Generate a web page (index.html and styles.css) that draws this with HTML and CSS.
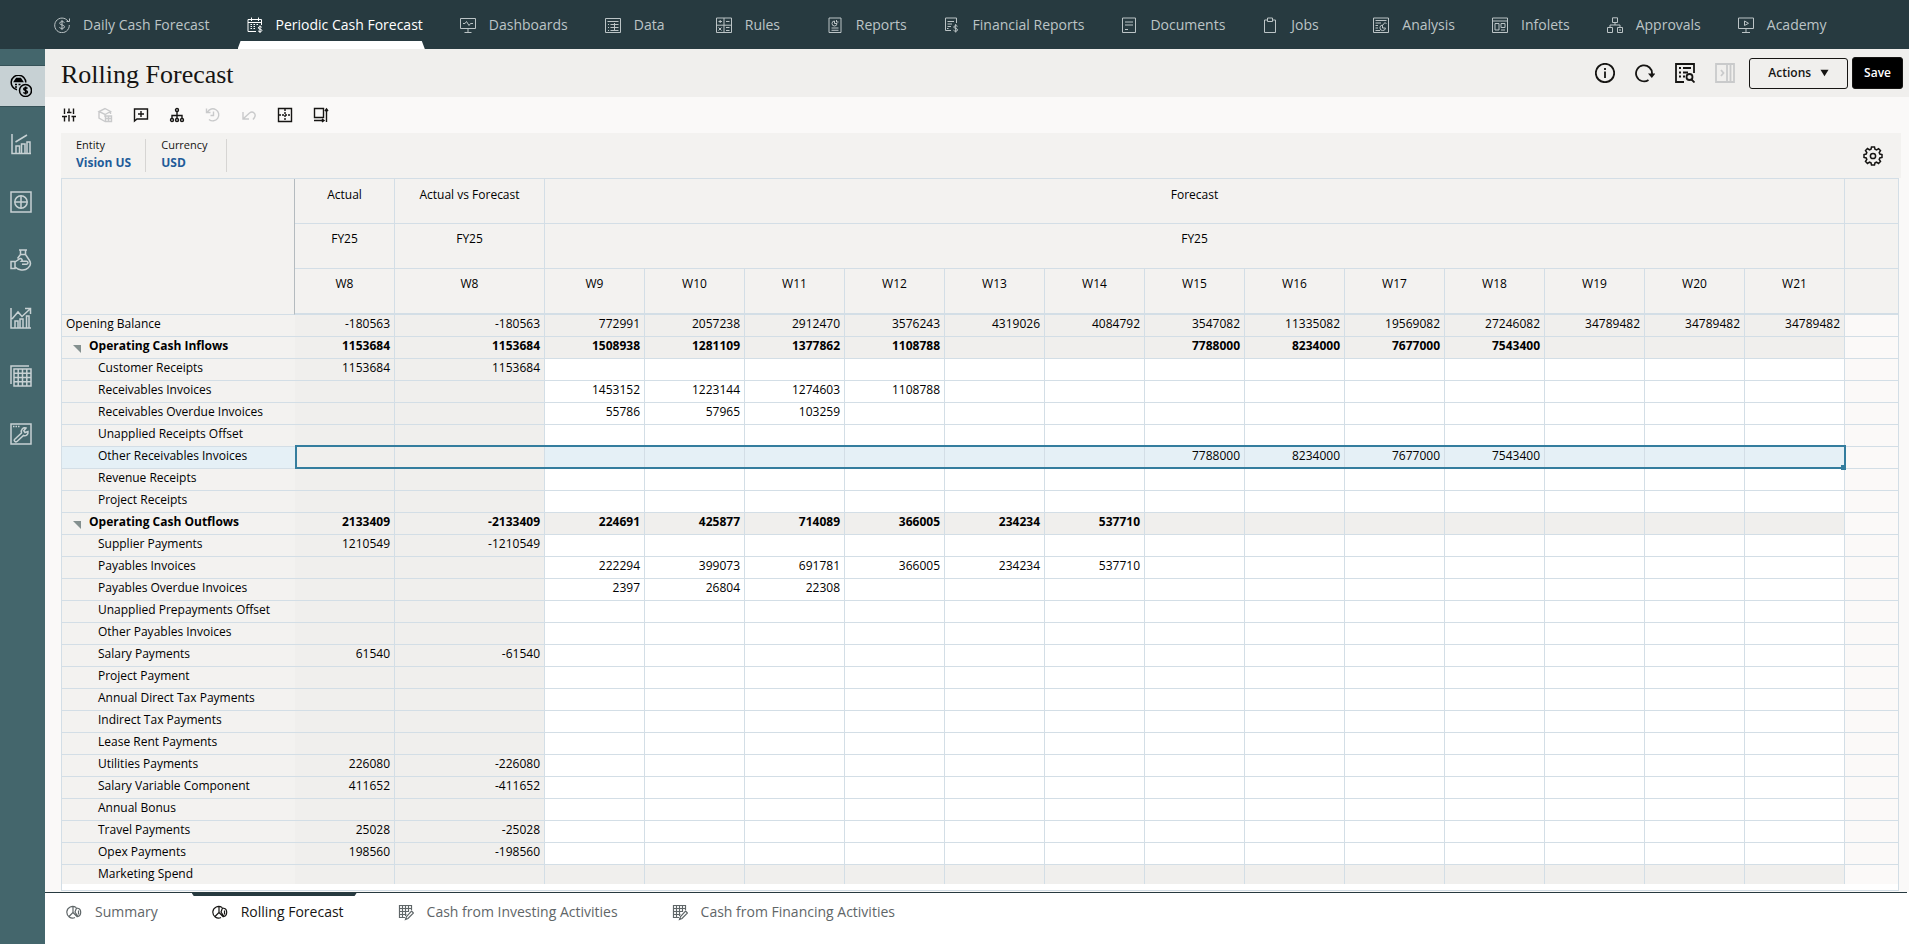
FILE: index.html
```html
<!DOCTYPE html>
<html lang="en">
<head>
<meta charset="utf-8">
<title>Rolling Forecast</title>
<link rel="stylesheet" href="styles.css">
</head>
<body>
<nav class="topnav" aria-label="Main">
  <a href="#"><svg viewBox="0 0 16 16"><path d="M14 4.2A7.3 7.3 0 1 0 15.3 8M15.5 1.500V4.500H12.500"/><path d="M10.500 5.500C9.500 4.200 5.700 4.200 5.700 6.300C5.700 8.500 10.500 7.400 10.500 9.800C10.500 11.900 6.400 11.900 5.400 10.400M8 3V13"/></svg>Daily Cash Forecast</a>
  <a href="#" class="active" aria-current="page"><svg viewBox="0 0 16 16"><path d="M9 14.500H1V2.500H14.500V8M1 5.500H14.500M4.500 .5V4M11.500 .5V4"/><path d="M3.500 7.500H5M6.500 7.500H8M9.500 7.500H11M3.500 9.500H5M6.500 9.500H8M3.500 11.500H5M6.500 11.500H8"/><path d="M14.800 10.300C14 9.300 11.300 9.400 11.300 10.900C11.300 12.500 14.900 11.700 14.900 13.400C14.900 15 12 15 11.100 13.900M13 8.500V16"/></svg>Periodic Cash Forecast</a>
  <a href="#"><svg viewBox="0 0 16 16"><path d="M.5 1.500H15.500V11.500H.5ZM8 11.500V15M4.500 15.500H11.500M3 6.500H5L6.500 4.500L9 8.500L10.500 6.500H13"/></svg>Dashboards</a>
  <a href="#"><svg viewBox="0 0 16 16"><path d="M.5 1.500H15.500V15.500H.5ZM2.500 4.500H13.500M3 7.500H4M5.500 7.500H13.500M3 10.500H4M5.500 10.500H13.500M3 13.500H4M5.500 13.500H13.500M9.500 6V14"/></svg>Data</a>
  <a href="#"><svg viewBox="0 0 16 16"><path d="M.5 1H15.500V15.500H.5ZM8 1V15.500M.5 8.200H15.500M2.500 4.500H6M4.200 3V6M10 4.500H13.500M2.500 10.500L5.500 13.500M5.500 10.500L2.500 13.500M10 10.500H13.500M10 13.500H13.500"/></svg>Rules</a>
  <a href="#"><svg viewBox="0 0 16 16"><path d="M2 1H14V15.500H2ZM4.500 11H11.500M4.500 13.300H11.500M7.500 4A2.500 2.500 0 1 0 10 6.500H7.500ZM9.500 3V5H11.500"/></svg>Reports</a>
  <a href="#"><svg viewBox="0 0 16 16"><path d="M7 13.500H1.500V1H12.500V6M3.500 4.500H10M3.500 7H8M3.500 9.500H7M3 11.500H4.500"/><path d="M13.500 9.300C12.700 8.300 9.800 8.400 9.800 10.100C9.800 11.800 13.600 11 13.600 12.800C13.600 14.600 10.600 14.600 9.500 13.300M11.700 7V15.500"/></svg>Financial Reports</a>
  <a href="#"><svg viewBox="0 0 16 16"><path d="M1.500 1H14.500V15.500H1.500ZM4 5H12M4 8H12M4 12.500H7"/></svg>Documents</a>
  <a href="#"><svg viewBox="0 0 16 16"><path d="M5 3H2.500V15.500H13.500V3H11M5.500 1H10.500V4.500H5.500Z"/></svg>Jobs</a>
  <a href="#"><svg viewBox="0 0 16 16"><path d="M.5 1H15.500V15.500H.5ZM2.500 3.500H13.500M2.500 6H8M2.500 8.500H5M2.500 11H5M2.500 13.500H7M9.500 8A2.800 2.800 0 1 0 12.500 11H9.500ZM9 9L12 5.500L13.500 7"/></svg>Analysis</a>
  <a href="#"><svg viewBox="0 0 16 16"><path d="M.5 1H15.500V15.500H.5ZM.5 4H15.500M3 6.500H7V13H3ZM9 6.500H13V10.500H9ZM9 13H13"/></svg>Infolets</a>
  <a href="#"><svg viewBox="0 0 16 16"><path d="M5.500 .8H10.500V5.500H5.500ZM8 5.500V8M3 10.500V8H13V10.500M.5 10.500H5.500V15.500H.5ZM10.500 10.500H15.500V15.500H10.500ZM12 13H14"/></svg>Approvals</a>
  <a href="#"><svg viewBox="0 0 16 16"><path d="M.5 1H15.500V11.500H.5ZM8 11.500V15M4 15.500H12M6.500 4V8.500L10.500 6.300Z"/></svg>Academy</a>
</nav>
<div class="shell">
  <nav class="sidebar" aria-label="Forecast sections">
    <a href="#" class="active" aria-label="Cash forecast"><svg viewBox="0 0 22 22"><path d="M7 14.700A7.300 7.300 0 1 1 15.800 7.500"/><path d="M4.500 6.500H12.500L10.500 3.500H6.500ZM5 9.500H7M8.500 9.500H10.500M5 12H7" fill="currentColor"/><circle cx="15.500" cy="15.500" r="6"/><path d="M17.500 13.500C16.500 12.300 13.700 12.500 13.700 14.100C13.700 15.900 17.500 15 17.500 17C17.500 18.700 14.400 18.700 13.400 17.400M15.600 11.500V19.500"/></svg></a>
    <a href="#" aria-label="Performance"><svg viewBox="0 0 22 22"><path d="M2 1V20.500H21M6 20V13H9.500V20M11.500 20V11H15V20M17 20V9H20V20M5.500 9L17 2"/></svg></a>
    <a href="#" aria-label="Global"><svg viewBox="0 0 22 22"><path d="M1 1H21V21H1ZM11 4.800V17.200M4.800 11H17.200"/><circle cx="11" cy="11" r="6.200"/></svg></a>
    <a href="#" aria-label="Funding"><svg viewBox="0 0 22 22"><path d="M9 1H17M10.500 1V5.500L7.500 9.500M15.500 1V5.500L19.500 11.500C21 14 20.500 17 18 19M10.500 5.500H15.500M1 12.500H5V19.500H1ZM5 13L9.500 9.800C11.500 9 13 11 11.500 12.300H16.500C18.500 12.500 18.500 15 16.500 15.200H12M5 18C8 21 14.500 22.500 18 19"/></svg></a>
    <a href="#" aria-label="Trends"><svg viewBox="0 0 22 22"><path d="M1 1V21H21M5 21V14H8V21M10 21V12H13V21M16.500 21V9H19V21M2 12L8 5L12 9.500L20 2M15 1.500H20.500V7"/></svg></a>
    <a href="#" aria-label="Grids"><svg viewBox="0 0 22 22"><path d="M1 19V1H19M4 4H21V21H4ZM8.200 4V21M12.500 4V21M16.800 4V21M4 8.200H21M4 12.500H21M4 16.800H21"/></svg></a>
    <a href="#" aria-label="Configuration"><svg viewBox="0 0 22 22"><path d="M1 1H21V21H1ZM3 3.500H4.500M5.500 3.500H7M8 3.500H9.500M4.500 16.500L11.500 10C10.500 7 13 4 16 5L13.800 7.800L15 9.500L18 8.500C18.500 12 15.500 13.500 13.500 12.500L7 18.500C5.500 19.500 3.500 18 4.500 16.500Z"/></svg></a>
  </nav>
  <main class="main">
    <header class="page-head">
      <h1>Rolling Forecast</h1>
      <div class="head-actions">
        <button class="icon-btn" aria-label="Information"><svg viewBox="0 0 20 20"><circle cx="10" cy="10" r="9.200"/><path d="M10 8.500V15M10 5V7"/></svg></button>
        <button class="icon-btn" aria-label="Refresh"><svg viewBox="0 0 20 20"><path d="M13.500 17A8 8 0 1 1 17 11"/><path d="M13 10.500H20.500L16.800 15Z" fill="currentColor" stroke="none"/></svg></button>
        <button class="icon-btn" aria-label="View details"><svg viewBox="0 0 20 20"><path d="M9 19H1V1H19V10M4 5H6M8 5H16M4 9.500H6M8 9.500H13M4 13.500H6M8 13.500H10"/><circle cx="14.500" cy="14" r="3"/><path d="M16.500 16.500L19.500 19.500"/></svg></button>
        <button class="icon-btn" aria-label="Expand panel" disabled><svg viewBox="0 0 20 20"><path d="M1 1H19V19H1ZM12 1V19M15.500 1V19M6 7L8.500 10L6 13"/></svg></button>
        <button class="btn">Actions<svg viewBox="0 0 10 8"><path d="M.5 .5H9.500L5 7.500Z" fill="currentColor" stroke="none"/></svg></button>
        <button class="btn primary">Save</button>
      </div>
    </header>
    <div class="toolbar" role="toolbar" aria-label="Grid tools">
      <button class="icon-btn" aria-label="Adjust"><svg viewBox="0 0 16 16"><path d="M3.500 1.500V7M3.500 10V14.500M1 9.500H6M8 1.500V5M8 8V14.500M6 5.500H10.500M12.500 1.500V7M12.500 10V14.500M10.500 9.500H15"/></svg></button>
      <button class="icon-btn" aria-label="Grid spread" disabled><svg viewBox="0 0 16 16"><path d="M8 1.500L13.500 4.500L8 7.500L2 4.500ZM2 4.500V11L8 14.500M8 7.500V10M13.500 4.500V7M8.500 9H14.500V14.500H8.500ZM8.500 11.500H14.500M11.500 9V14"/></svg></button>
      <button class="icon-btn" aria-label="Comments"><svg viewBox="0 0 16 16"><path d="M1.500 14V2H14.500V12H4ZM5 7H11M8 4V10"/></svg></button>
      <button class="icon-btn" aria-label="Hierarchy"><svg viewBox="0 0 16 16"><circle cx="8" cy="3" r="1.500"/><path d="M8 5V12M3 11V8.500H13V11"/><circle cx="3" cy="13" r="1.500"/><circle cx="8" cy="13" r="1.500"/><circle cx="13" cy="13" r="1.500"/></svg></button>
      <button class="icon-btn" aria-label="History" disabled><svg viewBox="0 0 16 16"><path d="M2.500 5A6 6 0 1 1 4 12.500M1.500 1.500V5.500H5.500M8.500 4.500V8.500H5.500"/></svg></button>
      <button class="icon-btn" aria-label="Undo" disabled><svg viewBox="0 0 16 16"><path d="M2 5V12H8M2 12L8.500 6C12 3.500 15.500 7 13.500 10.500L12 12.500"/></svg></button>
      <button class="icon-btn" aria-label="Lock cells"><svg viewBox="0 0 16 16"><path d="M1.500 1.500H14.500V14.500H1.500Z"/><path d="M8 2V14M2 8H14" stroke-dasharray="2 1"/></svg></button>
      <button class="icon-btn" aria-label="Resize"><svg viewBox="0 0 16 16"><path d="M1.500 1.500H10.500V10.500H1.500ZM1 13.500H11M9 12L11 13.500L9 15M13.500 2V15M12 4L13.500 2L15 4"/></svg></button>
    </div>
    <div class="workspace">
      <div class="pov">
        <div class="pov-item"><span>Entity</span><a href="#">Vision US</a></div>
        <div class="pov-item"><span>Currency</span><a href="#">USD</a></div>
        <button class="icon-btn gear" aria-label="Settings"><svg viewBox="0 0 20 20"><path d="M8.500 1H11.500L12 3.300L13.600 4L15.600 2.700L17.500 4.600L16.200 6.600L16.800 8L19 8.500V11.500L16.800 12L16.200 13.500L17.500 15.500L15.500 17.500L13.500 16.200L12 16.800L11.500 19H8.500L8 16.800L6.500 16.200L4.500 17.500L2.500 15.500L3.800 13.500L3.200 12L1 11.500V8.500L3.200 8L3.800 6.500L2.500 4.500L4.500 2.500L6.500 3.800L8 3.200Z"/><circle cx="10" cy="10" r="2.600"/></svg></button>
      </div>
      <div class="grid-frame">
        <div class="grid-scroll">
          <table class="grid">
            <colgroup><col class="c-label"><col class="c-val"><col class="c-wide"><col class="c-val" span="13"><col></colgroup>
            <thead>
              <tr><th rowspan="3" class="corner"></th><th>Actual</th><th>Actual vs Forecast</th><th colspan="13">Forecast</th><th></th></tr>
              <tr><th>FY25</th><th>FY25</th><th colspan="13">FY25</th><th></th></tr>
              <tr><th>W8</th><th>W8</th><th>W9</th><th>W10</th><th>W11</th><th>W12</th><th>W13</th><th>W14</th><th>W15</th><th>W16</th><th>W17</th><th>W18</th><th>W19</th><th>W20</th><th>W21</th><th></th></tr>
            </thead>
            <tbody id="rows"></tbody>
          </table>
        </div>
      </div>
    </div>
    <nav class="tabs" aria-label="Forms">
      <a href="#"><svg viewBox="0 0 16 16"><path d="M9 13.500A5.800 5.800 0 1 1 10 3.500M7 2.500V8.500L3 12.500M7 8.500L11.500 13M10.500 4L9 8L12 12.500C15.500 11.500 15.500 5.500 12.500 4.500ZM12.500 6.500V10.500"/></svg>Summary</a>
      <a href="#" class="active" aria-current="page"><svg viewBox="0 0 16 16"><path d="M9 13.500A5.800 5.800 0 1 1 10 3.500M7 2.500V8.500L3 12.500M7 8.500L11.500 13M10.500 4L9 8L12 12.500C15.500 11.500 15.500 5.500 12.500 4.500ZM12.500 6.500V10.500"/></svg>Rolling Forecast</a>
      <a href="#"><svg viewBox="0 0 16 16"><path d="M7 13.500H1.500V1.500H13.500V6M1.500 4.500H13.500M1.500 7.500H11M1.500 10.500H8.500M4.500 1.500V13.500M7.500 1.500V12M10.500 1.500V8M13.500 7L15.500 9L10 14.500L7.500 15.500L8.500 12.500Z"/></svg>Cash from Investing Activities</a>
      <a href="#"><svg viewBox="0 0 16 16"><path d="M7 13.500H1.500V1.500H13.500V6M1.500 4.500H13.500M1.500 7.500H11M1.500 10.500H8.500M4.500 1.500V13.500M7.500 1.500V12M10.500 1.500V8M13.500 7L15.500 9L10 14.500L7.500 15.500L8.500 12.500Z"/></svg>Cash from Financing Activities</a>
    </nav>
  </main>
</div>
<script src="app.js"></script>
</body>
</html>
```
FILE: styles.css
```css
* { box-sizing: border-box; }
body {
  margin: 0;
  height: 100vh;
  display: flex;
  flex-direction: column;
  overflow: hidden;
  background: #fff;
  color: #161513;
  font: 12px/18px "Open Sans", "Noto Sans", sans-serif;
}
a { color: inherit; text-decoration: none; }
svg { fill: none; stroke: currentColor; stroke-width: 1; flex: none; }

.topnav {
  display: flex;
  gap: 37px;
  flex: none;
  height: 49px;
  padding-left: 54px;
  background: #273a40;
  color: #bcc4c6;
  font-size: 14px;
  white-space: nowrap;
}
.topnav a {
  position: relative;
  display: flex;
  align-items: center;
  gap: 13px;
  min-width: 74px;
}
.topnav svg { width: 16px; height: 16px; }
.topnav .active { color: #fff; }
.topnav .active::after {
  content: "";
  position: absolute;
  left: -9px;
  right: -2px;
  bottom: 0;
  height: 8px;
  background: #fff;
  clip-path: polygon(3px 0, calc(100% - 3px) 0, 100% 100%, 0 100%);
}

.shell { display: flex; flex: 1; min-height: 0; }
.sidebar {
  display: flex;
  flex-direction: column;
  gap: 16px;
  flex: none;
  width: 45px;
  padding-top: 16px;
  background: #44666c;
  color: #c7d1d3;
}
.sidebar a {
  display: flex;
  align-items: center;
  height: 42px;
  padding-left: 10px;
}
.sidebar svg { width: 22px; height: 22px; stroke-width: 1.5; }
.sidebar .active {
  background: #c7d1d4;
  color: #000;
  border-top: 1px solid #365258;
  border-bottom: 1px solid #365258;
}

.main { display: flex; flex-direction: column; flex: 1; min-width: 0; }
.page-head {
  display: flex;
  align-items: center;
  justify-content: space-between;
  flex: none;
  height: 48px;
  padding: 0 6px 0 16px;
  background: #f0efed;
}
h1 { margin: 0; padding-top: 4px; font: 26px/32px "Liberation Serif", serif; }
.head-actions { display: flex; align-items: center; }
.icon-btn {
  display: flex;
  padding: 0;
  border: 0;
  background: none;
  color: #161513;
}
.icon-btn:disabled { color: #c9cacb; }
.icon-btn svg { width: 20px; height: 20px; stroke-width: 1.8; }
.head-actions .icon-btn { margin-right: 20px; }
.head-actions .icon-btn:disabled { margin-right: 14px; }
.btn {
  display: flex;
  align-items: center;
  gap: 9px;
  height: 31px;
  padding: 0 18px;
  border: 1px solid #161513;
  border-radius: 3px;
  background: none;
  color: #161513;
  font: 600 12px/18px "Open Sans", "Noto Sans", sans-serif;
}
.btn svg { width: 9px; height: 8px; }
.btn.primary { margin-left: 4px; padding: 0 11px; height: 32px; background: #000; color: #fff; }

.toolbar {
  display: flex;
  align-items: center;
  gap: 20px;
  flex: none;
  height: 36px;
  padding-left: 16px;
  background: #faf9f8;
}
.toolbar svg { width: 16px; height: 16px; stroke-width: 1.4; }

.workspace {
  display: flex;
  flex-direction: column;
  flex: 1;
  min-height: 0;
  padding: 0 8px 1px 16px;
  background: #faf9f8;
}
.pov {
  display: flex;
  align-items: center;
  flex: none;
  height: 45px;
  background: #f3f2f0;
}
.pov-item {
  display: flex;
  flex-direction: column;
  padding: 0 14px 0 15px;
  height: 33px;
  border-right: 1px solid #d6d5d3;
  font-size: 11px;
  line-height: 12px;
}
.pov-item:nth-child(2) { padding-right: 18px; }
.pov-item a { color: #1f5c99; font-size: 12px; line-height: 24px; font-weight: 700; }
.gear { margin: 0 18px 0 auto; }
.gear svg { stroke-width: 1.5; }

.grid-frame {
  flex: 1;
  min-height: 0;
  margin-right: 2px;
  padding-bottom: 6px;
  border: 1px solid #d3dee6;
  background: #fff;
}
.grid-scroll { height: 100%; overflow: hidden; }
.grid {
  width: 100%;
  table-layout: fixed;
  border-collapse: separate;
  border-spacing: 0;
  color: #000;
}
.c-label { width: 233px; }
.c-val { width: 100px; }
.c-wide { width: 150px; }
.grid th, .grid td {
  position: relative;
  padding: 0 4px;
  border: 0 solid #d3dee6;
  border-width: 0 1px 1px 0;
  vertical-align: top;
  white-space: nowrap;
}
.grid thead th { height: 45px; padding-top: 6px; background: #f3f2f0; font-weight: 400; }
.grid thead tr:first-child th { padding-top: 7px; }
.grid thead tr:last-child th { height: 46px; border-bottom-width: 2px; }
.grid thead .corner { border-right-color: #b4bbbf; }
.grid thead th:last-child, .grid td:last-child { border-right: 0; }
.grid tbody th { height: 22px; border-right: 0; background: #f3f2f0; text-align: left; font-weight: 400; }
.grid td { height: 22px; text-align: right; }
.grid .ro { background: #f0efed; }
.grid .spare { background: #fbf9f8; }
.grid .child { padding-left: 36px; }
.grid .group th, .grid .group td { font-weight: 700; }
.grid .toggle {
  display: inline-block;
  width: 8px;
  height: 8px;
  margin: 0 8px 0 7px;
  padding: 0;
  border: 0;
  vertical-align: -3px;
  background: #84908f;
  clip-path: polygon(0 0, 100% 0, 100% 100%);
}
.selected th, .selected .open { background: #e5f0f6 !important; }
.selected .cell::after {
  content: "";
  position: absolute;
  inset: -2px -1px -1px 0;
  border: 0 solid #347d9e;
  border-width: 2px 0;
}
.selected .first::after { border-left-width: 2px; }
.selected .last { z-index: 1; }
.selected .last::after { right: -2px; border-right-width: 2px; }
.selected .last::before {
  content: "";
  position: absolute;
  right: -2px;
  bottom: -2px;
  width: 5px;
  height: 5px;
  background: #347d9e;
}

.tabs {
  display: flex;
  gap: 54px;
  flex: none;
  height: 52px;
  margin-right: 2px;
  padding-left: 21px;
  border-top: 1px solid #273a40;
  color: #5f6668;
  font-size: 14px;
  line-height: 38px;
}
.tabs a { position: relative; display: flex; gap: 13px; }
.tabs svg { width: 16px; height: 38px; stroke-width: 1.2; }
.tabs .active { color: #161513; }
.tabs .active::before {
  content: "";
  position: absolute;
  top: 0;
  left: -20px;
  right: -13px;
  height: 3px;
  background: #273a40;
  clip-path: polygon(0 0, 100% 0, calc(100% - 2px) 100%, 2px 100%);
}
```
FILE: app.js
```js
// label | kind (g group, r read-only row, c child, s selected child, x read-only child) | values
const rows = `
Opening Balance|r|-180563 -180563 772991 2057238 2912470 3576243 4319026 4084792 3547082 11335082 19569082 27246082 34789482 34789482 34789482
Operating Cash Inflows|g|1153684 1153684 1508938 1281109 1377862 1108788 . . 7788000 8234000 7677000 7543400
Customer Receipts|c|1153684 1153684
Receivables Invoices|c|. . 1453152 1223144 1274603 1108788
Receivables Overdue Invoices|c|. . 55786 57965 103259
Unapplied Receipts Offset|c|
Other Receivables Invoices|s|. . . . . . . . 7788000 8234000 7677000 7543400
Revenue Receipts|c|
Project Receipts|c|
Operating Cash Outflows|g|2133409 -2133409 224691 425877 714089 366005 234234 537710
Supplier Payments|c|1210549 -1210549
Payables Invoices|c|. . 222294 399073 691781 366005 234234 537710
Payables Overdue Invoices|c|. . 2397 26804 22308
Unapplied Prepayments Offset|c|
Other Payables Invoices|c|
Salary Payments|c|61540 -61540
Project Payment|c|
Annual Direct Tax Payments|c|
Indirect Tax Payments|c|
Lease Rent Payments|c|
Utilities Payments|c|226080 -226080
Salary Variable Component|c|411652 -411652
Annual Bonus|c|
Travel Payments|c|25028 -25028
Opex Payments|c|198560 -198560
Marketing Spend|x|`.trim().split("\n");

const columnCount = 15;
document.getElementById("rows").innerHTML = rows.map(line => {
  const [label, kind, list] = line.split("|");
  const values = list.split(" ");
  const group = kind === "g";
  const child = "csx".includes(kind);
  let cells = "";
  for (let i = 0; i < columnCount; i++) {
    const value = values[i] && values[i] !== "." ? values[i] : "";
    const readOnly = i < 2 || "grx".includes(kind);
    const edge = i === 0 ? " first" : i === columnCount - 1 ? " last" : "";
    cells += `<td class="cell ${readOnly ? "ro" : "open"}${edge}">${value}</td>`;
  }
  const toggle = group ? `<button class="toggle" aria-label="Collapse ${label}"></button>` : "";
  const rowClass = group ? "group" : kind === "s" ? "selected" : "";
  return `<tr class="${rowClass}"><th scope="row" class="${child ? "child" : ""}">${toggle}${label}</th>${cells}<td class="spare"></td></tr>`;
}).join("");
```
